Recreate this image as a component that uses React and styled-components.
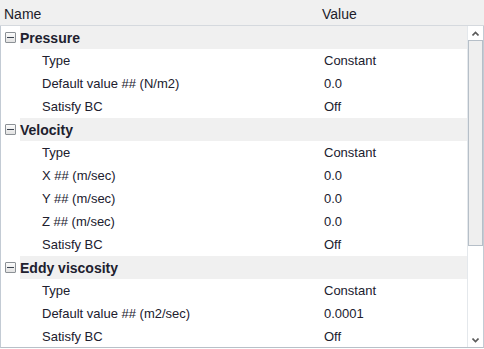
import styled, { createGlobalStyle } from "styled-components";

const Global = createGlobalStyle`
  html, body { margin: 0; padding: 0; background: #ffffff; }
  body { font-family: "Liberation Sans", Arial, sans-serif; }
`;

const Root = styled.div`
  width: 484px;
  height: 349px;
  display: flex;
  flex-direction: column;
  background: #ffffff;
  overflow: hidden;
`;

const Header = styled.div`
  height: 25px;
  flex: none;
  display: grid;
  grid-template-columns: 322px 1fr;
  align-items: center;
  background: #f0f0f0;
  border-bottom: 1px solid #d5d9de;
  font-size: 14px;
  color: #1c1c2a;
`;

const HeaderCell = styled.div`
  padding-left: ${(p) => p.pad}px;
  padding-top: 2px;
`;

const Body = styled.div`
  height: 321px;
  flex: none;
  display: flex;
  border-left: 1px solid #c3cbd4;
  border-bottom: 1px solid #b8c0c8;
  border-right: 1px solid #c3cbd4;
`;

const List = styled.div`
  flex: 1;
  overflow: hidden;
  display: flex;
  flex-direction: column;
`;

const Row = styled.div`
  height: 23px;
  flex: none;
  display: grid;
  grid-template-columns: 323px 1fr;
  align-items: center;
  font-size: 13px;
  color: #20202e;
`;

const GroupRow = styled.div`
  height: 23px;
  flex: none;
  display: flex;
  align-items: stretch;
`;

const ToggleCell = styled.div`
  width: 19px;
  flex: none;
  display: flex;
  align-items: center;
  padding-left: 4px;
  box-sizing: border-box;
`;

const Toggle = styled.div`
  width: 11px;
  height: 11px;
  box-sizing: border-box;
  border: 1px solid #8c9196;
  border-radius: 1px;
  background: linear-gradient(#fbfbfb, #e2e2e2);
  display: flex;
  align-items: center;
  justify-content: center;
  &::after {
    content: "";
    width: 7px;
    height: 1px;
    background: #3c4450;
  }
`;

const GroupLabel = styled.div`
  flex: 1;
  background: #f0f0f0;
  display: flex;
  align-items: center;
  font-size: 14px;
  font-weight: bold;
  color: #20202e;
`;

const NameCell = styled.div`
  padding-left: 41px;
`;

const Scrollbar = styled.div`
  width: 15px;
  flex: none;
  display: flex;
  flex-direction: column;
  border-left: 1px solid #e4e8ec;
  background: #ffffff;
`;

const ArrowButton = styled.div`
  height: 14px;
  flex: none;
  display: flex;
  align-items: center;
  justify-content: center;
  color: #606060;
`;

const Thumb = styled.div`
  height: 206px;
  flex: none;
  margin: 0 0 0 0;
  box-sizing: border-box;
  border: 1px solid #b6bfc8;
  background: #efefef;
`;

const Track = styled.div`
  flex: 1;
`;

const groups = [
  {
    name: "Pressure",
    items: [
      ["Type", "Constant"],
      ["Default value ## (N/m2)", "0.0"],
      ["Satisfy BC", "Off"],
    ],
  },
  {
    name: "Velocity",
    items: [
      ["Type", "Constant"],
      ["X ## (m/sec)", "0.0"],
      ["Y ## (m/sec)", "0.0"],
      ["Z ## (m/sec)", "0.0"],
      ["Satisfy BC", "Off"],
    ],
  },
  {
    name: "Eddy viscosity",
    items: [
      ["Type", "Constant"],
      ["Default value ## (m2/sec)", "0.0001"],
      ["Satisfy BC", "Off"],
    ],
  },
];

function Chevron({ up }) {
  return (
    <svg width="7" height="5" viewBox="0 0 7 5">
      <path
        d={up ? "M0.5 4.5 L3.5 1.5 L6.5 4.5" : "M0.5 0.5 L3.5 3.5 L6.5 0.5"}
        fill="none"
        stroke="#5a5a5a"
        strokeWidth="1.6"
      />
    </svg>
  );
}

export default function App() {
  return (
    <Root>
      <Global />
      <Header>
        <HeaderCell pad={4}>Name</HeaderCell>
        <HeaderCell pad={0}>Value</HeaderCell>
      </Header>
      <Body>
        <List>
          {groups.map((g) => (
            <div key={g.name}>
              <GroupRow>
                <ToggleCell>
                  <Toggle />
                </ToggleCell>
                <GroupLabel>{g.name}</GroupLabel>
              </GroupRow>
              {g.items.map(([n, v]) => (
                <Row key={n}>
                  <NameCell>{n}</NameCell>
                  <div>{v}</div>
                </Row>
              ))}
            </div>
          ))}
        </List>
        <Scrollbar>
          <ArrowButton>
            <Chevron up />
          </ArrowButton>
          <Thumb />
          <Track />
          <ArrowButton>
            <Chevron />
          </ArrowButton>
        </Scrollbar>
      </Body>
    </Root>
  );
}
